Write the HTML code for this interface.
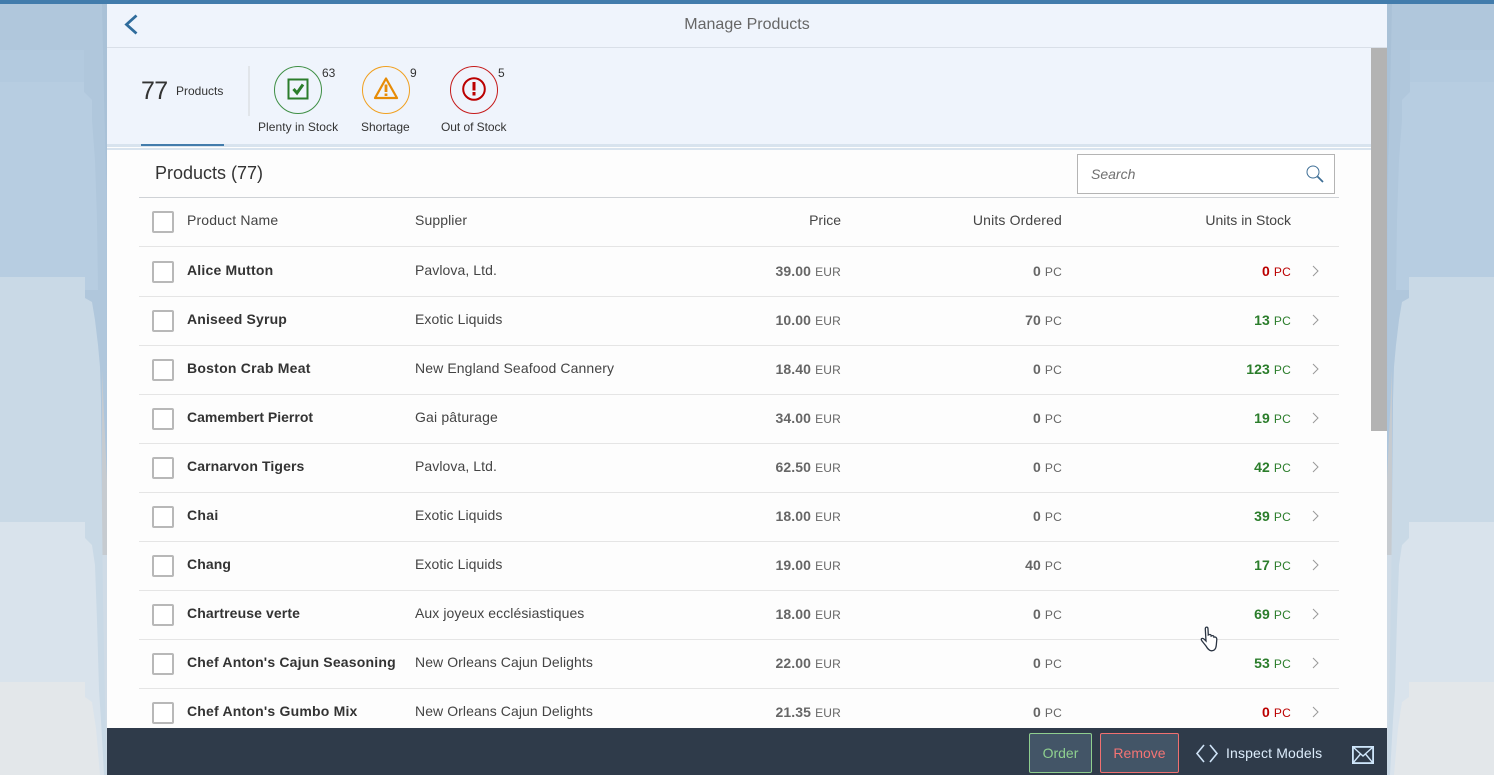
<!DOCTYPE html>
<html><head><meta charset="utf-8"><style>
html,body{margin:0;padding:0}
body{width:1494px;height:775px;overflow:hidden;position:relative;background:#afc6dc;font-family:"Liberation Sans",Arial,sans-serif;color:#333}
.a{position:absolute;white-space:nowrap}
.bg{position:absolute;left:0;top:0}
.line{position:absolute;left:139px;width:1200px;height:1px;background:#e5e5e5}
.cb{position:absolute;left:152px;width:18px;height:18px;border:2px solid #b8b8b8;border-radius:2px;background:#fff}
.t{position:absolute;font-size:14px;line-height:16px;white-space:nowrap}
.n{left:187px;font-weight:bold;color:#333}
.s{left:415px;color:#444;letter-spacing:.08px}
.r{text-align:right;color:#666}
.r b{font-weight:bold;letter-spacing:.1px}
.r span{font-size:12px;margin-left:4px;letter-spacing:.2px}
.p{right:653px}.o{right:432px}.u{right:203px}
.g,.g span{color:#2b7d2b}.x,.x span{color:#bb0000}
.h{color:#444}
svg.c{position:absolute;left:1311px;width:9px;height:12px}
</style></head><body>
<svg class="bg" width="1494" height="775">
<rect width="1494" height="775" fill="#adc5dc"/>
<g id="l">
<polygon points="0,4 101,4 104,100 107,190 107,4" fill="#a9c1d7"/>
<polygon points="0,4 102,4 104,100 106,190 107,400 0,400" fill="#b0c7dc"/>
<polygon points="0,50 84,50 84,82 0,82" fill="#b3cadf"/>
<polygon points="0,82 84,82 84,92 92,100 92,120 95,160 97,220 98,290 0,290" fill="#b7cde1"/>
<polygon points="102,370 107,480 107,560 102,560" fill="#c6cbd0"/>
<polygon points="102,555 107,555 107,775 102,775" fill="#cfdbe6"/>
<polygon points="0,277 85,277 85,298 92,302 95,320 98,345 100,367 101,400 102,510 103,600 105,700 107,775 0,775" fill="#c9d9e6"/>
<polygon points="0,522 85,522 85,538 92,545 95,565 97,620 99,690 101,720 104,775 0,775" fill="#d9e3ec"/>
<polygon points="0,682 85,682 85,697 92,702 96,728 100,775 0,775" fill="#e3e7ea"/>
</g>
<g transform="translate(1494,0) scale(-1,1)">
<polygon points="0,4 101,4 104,100 107,190 107,4" fill="#a9c1d7"/>
<polygon points="0,4 102,4 104,100 106,190 107,400 0,400" fill="#b0c7dc"/>
<polygon points="0,50 84,50 84,82 0,82" fill="#b3cadf"/>
<polygon points="0,82 84,82 84,92 92,100 92,120 95,160 97,220 98,290 0,290" fill="#b7cde1"/>
<polygon points="102,370 107,480 107,560 102,560" fill="#c6cbd0"/>
<polygon points="102,555 107,555 107,775 102,775" fill="#cfdbe6"/>
<polygon points="0,277 85,277 85,298 92,302 95,320 98,345 100,367 101,400 102,510 103,600 105,700 107,775 0,775" fill="#c9d9e6"/>
<polygon points="0,522 85,522 85,538 92,545 95,565 97,620 99,690 101,720 104,775 0,775" fill="#d9e3ec"/>
<polygon points="0,682 85,682 85,697 92,702 96,728 100,775 0,775" fill="#e3e7ea"/>
</g>
</svg>
<div class="a" style="left:0;top:0;width:1494px;height:4px;background:#427cac"></div>
<div class="a" style="left:107px;top:4px;width:1280px;height:771px;background:#fdfdfd"></div>
<div class="a" style="left:107px;top:4px;width:1280px;height:43px;background:#eff4fc"></div>
<div class="a" style="left:107px;top:47px;width:1280px;height:1px;background:#d9dfe8"></div>
<div class="a" style="left:107px;top:48px;width:1264px;height:96px;background:#eff4fc"></div>
<div class="a" style="left:1371px;top:48px;width:16px;height:383px;background:#b3b3b3"></div>
<div class="a" style="left:107px;top:144px;width:1264px;height:3px;background:#d8e3ee"></div>
<div class="a" style="left:107px;top:148px;width:1264px;height:2px;background:#d8e3ee"></div>
<div class="a" style="left:141px;top:144px;width:83px;height:2px;background:#427cac"></div>

<svg class="a" style="left:124px;top:14px" width="16" height="22"><path d="M12.5 1.5 L2.5 10.5 L12.5 19.5" fill="none" stroke="#2f6c9c" stroke-width="2.8"/></svg>
<div class="a" style="left:107px;width:1280px;top:15px;text-align:center;font-size:16px;line-height:19px;color:#666">Manage Products</div>

<div class="a" style="left:141px;top:77px;font-size:25px;line-height:28px;letter-spacing:-.6px;color:#333">77</div>
<div class="a" style="left:176px;top:84px;font-size:12px;line-height:14px;color:#333">Products</div>
<div class="a" style="left:248px;top:66px;width:2px;height:50px;background:#e1e5ea"></div>

<svg class="a" style="left:250px;top:60px" width="270" height="60" fill="none">
<circle cx="48" cy="30" r="23.5" stroke="#3f8f45"/>
<rect x="38.5" y="19.5" width="19" height="19" stroke="#2b7d2b" stroke-width="2"/>
<path d="M43.5 29 L47 33 L53 24.5" stroke="#2b7d2b" stroke-width="3"/>
<circle cx="136" cy="30" r="23.5" stroke="#f0a020"/>
<path d="M136 18.5 L147 38 L125 38 Z" stroke="#e78c07" stroke-width="2.2" stroke-linejoin="round"/>
<path d="M136 24.5 V32 M136 33.5 V36" stroke="#e78c07" stroke-width="2.8"/>
<circle cx="224" cy="30" r="23.5" stroke="#c51a1a"/>
<circle cx="224" cy="29" r="10.8" stroke="#bb0000" stroke-width="2"/>
<path d="M224 22 V30.5 M224 32 V35.5" stroke="#bb0000" stroke-width="3"/>
</svg>
<div class="a" style="left:322px;top:66px;font-size:12px;line-height:14px">63</div>
<div class="a" style="left:410px;top:66px;font-size:12px;line-height:14px">9</div>
<div class="a" style="left:498px;top:66px;font-size:12px;line-height:14px">5</div>
<div class="a" style="left:258px;top:120px;font-size:12px;line-height:14px;letter-spacing:.05px">Plenty in Stock</div>
<div class="a" style="left:361px;top:120px;font-size:12px;line-height:14px">Shortage</div>
<div class="a" style="left:441px;top:120px;font-size:12px;line-height:14px;letter-spacing:-.05px">Out of Stock</div>

<div class="a" style="left:155px;top:163px;font-size:18px;line-height:21px;color:#333">Products (77)</div>
<div class="a" style="left:1077px;top:154px;width:256px;height:38px;border:1px solid #b4b4b4;background:#fff"></div>
<div class="a" style="left:1091px;top:166px;font-size:14px;line-height:16px;font-style:italic;color:#707070">Search</div>
<svg class="a" style="left:1305px;top:164px" width="20" height="20" fill="none"><circle cx="8" cy="8" r="6" stroke="#3f6f96" stroke-width="1"/><path d="M12.5 12.5 L18 18" stroke="#3f6f96" stroke-width="1.8"/></svg>
<div class="line" style="top:197px;background:#cfd2d6"></div>

<div class="cb" style="top:211px"></div>
<div class="t h" style="left:187px;top:212px;letter-spacing:.15px">Product Name</div>
<div class="t h" style="left:415px;top:212px;letter-spacing:.1px">Supplier</div>
<div class="t h p" style="top:212px">Price</div>
<div class="t h o" style="top:212px;letter-spacing:.15px">Units Ordered</div>
<div class="t h u" style="top:212px">Units in Stock</div>
<div class="line" style="top:246px"></div>

<div class="cb" style="top:261px"></div><div class="t n" style="top:262px;letter-spacing:.2px">Alice Mutton</div><div class="t s" style="top:262px">Pavlova, Ltd.</div><div class="t r p" style="top:263px"><b>39.00</b><span>EUR</span></div><div class="t r o" style="top:263px"><b>0</b><span>PC</span></div><div class="t r u x" style="top:263px"><b>0</b><span>PC</span></div><svg class="c" style="top:265px"><path d="M2 1 L7 6 L2 11" fill="none" stroke="#999"/></svg><div class="line" style="top:296px"></div>
<div class="cb" style="top:310px"></div><div class="t n" style="top:311px;letter-spacing:.15px">Aniseed Syrup</div><div class="t s" style="top:311px">Exotic Liquids</div><div class="t r p" style="top:312px"><b>10.00</b><span>EUR</span></div><div class="t r o" style="top:312px"><b>70</b><span>PC</span></div><div class="t r u g" style="top:312px"><b>13</b><span>PC</span></div><svg class="c" style="top:314px"><path d="M2 1 L7 6 L2 11" fill="none" stroke="#999"/></svg><div class="line" style="top:345px"></div>
<div class="cb" style="top:359px"></div><div class="t n" style="top:360px;letter-spacing:.24px">Boston Crab Meat</div><div class="t s" style="top:360px;letter-spacing:.11px">New England Seafood Cannery</div><div class="t r p" style="top:361px"><b>18.40</b><span>EUR</span></div><div class="t r o" style="top:361px"><b>0</b><span>PC</span></div><div class="t r u g" style="top:361px"><b>123</b><span>PC</span></div><svg class="c" style="top:363px"><path d="M2 1 L7 6 L2 11" fill="none" stroke="#999"/></svg><div class="line" style="top:394px"></div>
<div class="cb" style="top:408px"></div><div class="t n" style="top:409px">Camembert Pierrot</div><div class="t s" style="top:409px;letter-spacing:.17px">Gai pâturage</div><div class="t r p" style="top:410px"><b>34.00</b><span>EUR</span></div><div class="t r o" style="top:410px"><b>0</b><span>PC</span></div><div class="t r u g" style="top:410px"><b>19</b><span>PC</span></div><svg class="c" style="top:412px"><path d="M2 1 L7 6 L2 11" fill="none" stroke="#999"/></svg><div class="line" style="top:443px"></div>
<div class="cb" style="top:457px"></div><div class="t n" style="top:458px;letter-spacing:.11px">Carnarvon Tigers</div><div class="t s" style="top:458px">Pavlova, Ltd.</div><div class="t r p" style="top:459px"><b>62.50</b><span>EUR</span></div><div class="t r o" style="top:459px"><b>0</b><span>PC</span></div><div class="t r u g" style="top:459px"><b>42</b><span>PC</span></div><svg class="c" style="top:461px"><path d="M2 1 L7 6 L2 11" fill="none" stroke="#999"/></svg><div class="line" style="top:492px"></div>
<div class="cb" style="top:506px"></div><div class="t n" style="top:507px;letter-spacing:.3px">Chai</div><div class="t s" style="top:507px">Exotic Liquids</div><div class="t r p" style="top:508px"><b>18.00</b><span>EUR</span></div><div class="t r o" style="top:508px"><b>0</b><span>PC</span></div><div class="t r u g" style="top:508px"><b>39</b><span>PC</span></div><svg class="c" style="top:510px"><path d="M2 1 L7 6 L2 11" fill="none" stroke="#999"/></svg><div class="line" style="top:541px"></div>
<div class="cb" style="top:555px"></div><div class="t n" style="top:556px;letter-spacing:.1px">Chang</div><div class="t s" style="top:556px">Exotic Liquids</div><div class="t r p" style="top:557px"><b>19.00</b><span>EUR</span></div><div class="t r o" style="top:557px"><b>40</b><span>PC</span></div><div class="t r u g" style="top:557px"><b>17</b><span>PC</span></div><svg class="c" style="top:559px"><path d="M2 1 L7 6 L2 11" fill="none" stroke="#999"/></svg><div class="line" style="top:590px"></div>
<div class="cb" style="top:604px"></div><div class="t n" style="top:605px;letter-spacing:.11px">Chartreuse verte</div><div class="t s" style="top:605px">Aux joyeux ecclésiastiques</div><div class="t r p" style="top:606px"><b>18.00</b><span>EUR</span></div><div class="t r o" style="top:606px"><b>0</b><span>PC</span></div><div class="t r u g" style="top:606px"><b>69</b><span>PC</span></div><svg class="c" style="top:608px"><path d="M2 1 L7 6 L2 11" fill="none" stroke="#999"/></svg><div class="line" style="top:639px"></div>
<div class="cb" style="top:653px"></div><div class="t n" style="top:654px;letter-spacing:.19px">Chef Anton's Cajun Seasoning</div><div class="t s" style="top:654px">New Orleans Cajun Delights</div><div class="t r p" style="top:655px"><b>22.00</b><span>EUR</span></div><div class="t r o" style="top:655px"><b>0</b><span>PC</span></div><div class="t r u g" style="top:655px"><b>53</b><span>PC</span></div><svg class="c" style="top:657px"><path d="M2 1 L7 6 L2 11" fill="none" stroke="#999"/></svg><div class="line" style="top:688px"></div>
<div class="cb" style="top:702px"></div><div class="t n" style="top:703px;letter-spacing:.2px">Chef Anton's Gumbo Mix</div><div class="t s" style="top:703px">New Orleans Cajun Delights</div><div class="t r p" style="top:704px"><b>21.35</b><span>EUR</span></div><div class="t r o" style="top:704px"><b>0</b><span>PC</span></div><div class="t r u x" style="top:704px"><b>0</b><span>PC</span></div><svg class="c" style="top:706px"><path d="M2 1 L7 6 L2 11" fill="none" stroke="#999"/></svg>

<svg class="a" style="left:1197px;top:625px" width="22" height="28"><path d="M9 21 L5 16 C3 13.5 5.5 12.5 7.5 14.5 L9 16 L8.3 4 C8.3 1.5 11 1.5 11 4 L11.3 10 C12.8 9 14.2 9.5 14.2 11 C15.6 10.2 17 10.8 17 12.2 C18.6 11.6 19.8 12.4 19.8 14.5 L19.3 20 C19 23.5 17.5 25.8 14.5 25.8 C12 25.8 10.5 23.5 9 21 Z" fill="#fff" stroke="#2a3442" stroke-width="1.3"/></svg>

<div class="a" style="left:107px;top:728px;width:1280px;height:47px;background:#2f3b4a"></div>
<div class="a" style="left:1029px;top:733px;width:61px;height:38px;border:1px solid #8fce8f;border-radius:2px;background:#435567;color:#8fd08f;font-size:14px;line-height:38px;text-align:center">Order</div>
<div class="a" style="left:1100px;top:733px;width:77px;height:38px;border:1px solid #f07070;border-radius:2px;background:#435567;color:#f47474;font-size:14px;line-height:38px;text-align:center">Remove</div>
<svg class="a" style="left:1195px;top:743px" width="24" height="22" fill="none" stroke="#cfe3f7" stroke-width="1.6"><path d="M9 2 L2 10.5 L9 19 M15 2 L22 10.5 L15 19"/></svg>
<div class="a" style="left:1226px;top:745px;font-size:14px;line-height:16px;letter-spacing:.15px;color:#dcecfb">Inspect Models</div>
<svg class="a" style="left:1351px;top:745px" width="24" height="20" fill="none" stroke="#cfe6fb" stroke-width="1.8"><rect x="1.9" y="1.9" width="20.2" height="16.2"/><path d="M2 2 L12 11 L22 2 M2 18 L9.5 9 M22 18 L14.5 9" stroke-width="1.4"/></svg>
</body></html>
